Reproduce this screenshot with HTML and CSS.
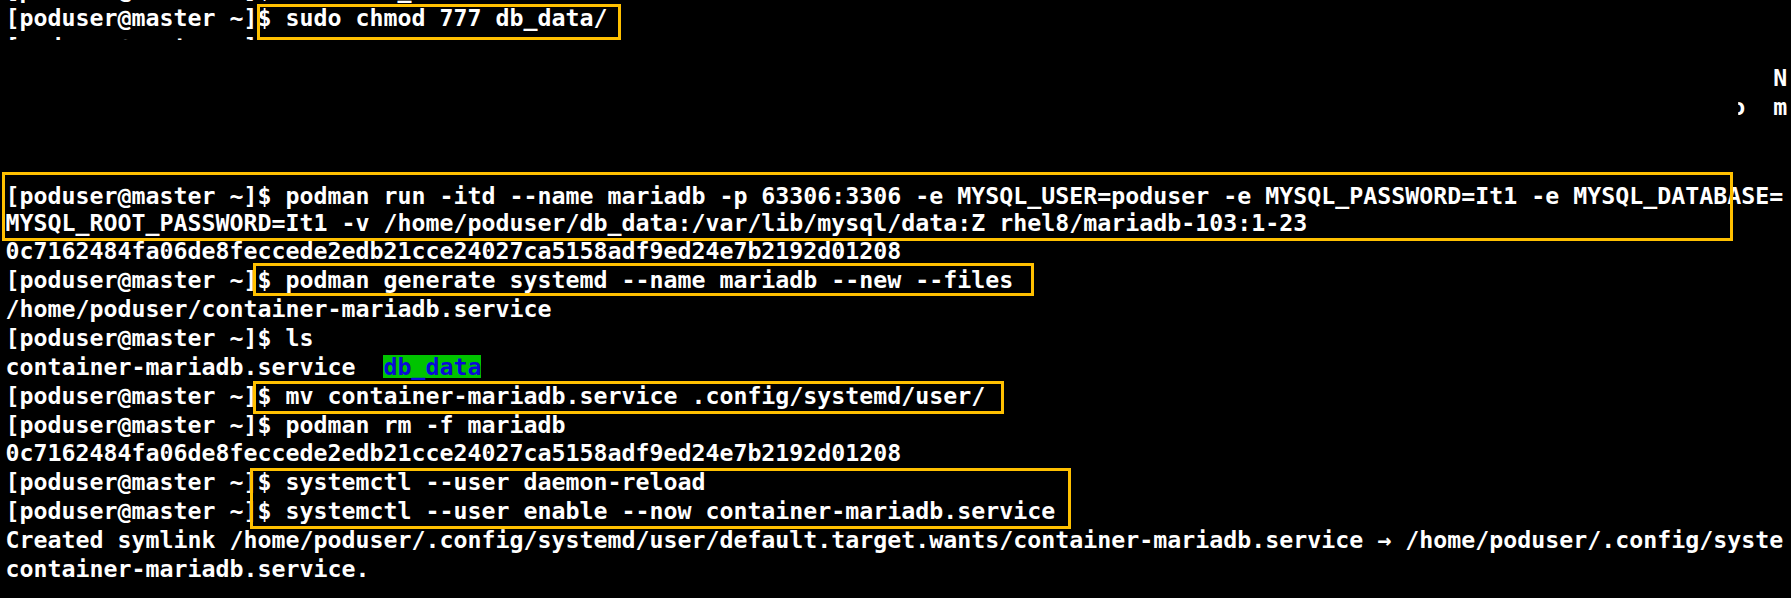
FILE: index.html
```html
<!DOCTYPE html>
<html lang="en">
<head>
<meta charset="utf-8">
<title>Terminal</title>
<link rel="stylesheet" href="styles.css">
</head>
<body>
<div class="term">
  <div class="clip clip-top"><div class="ln">[poduser@master ~]$ mkdir db_data</div></div>
  <div class="ln">[poduser@master ~]$ sudo chmod 777 db_data/</div>
  <div class="clip clip-bottom"><div class="ln">[poduser@master ~]$ ll</div></div>
  <div class="side">
    <div class="ln col-n">N</div>
    <div class="ln col-o"><span class="half">o</span>  m</div>
  </div>
  <div class="main">
    <div class="ln ln-1">[poduser@master ~]$ podman run -itd --name mariadb -p 63306:3306 -e MYSQL_USER=poduser -e MYSQL_PASSWORD=It1 -e MYSQL_DATABASE=</div>
    <div class="ln ln-2">MYSQL_ROOT_PASSWORD=It1 -v /home/poduser/db_data:/var/lib/mysql/data:Z rhel8/mariadb-103:1-23</div>
    <div class="ln">0c7162484fa06de8feccede2edb21cce24027ca5158adf9ed24e7b2192d01208</div>
    <div class="ln">[poduser@master ~]$ podman generate systemd --name mariadb --new --files</div>
    <div class="ln">/home/poduser/container-mariadb.service</div>
    <div class="ln">[poduser@master ~]$ ls</div>
    <div class="ln">container-mariadb.service  <span class="dir">db_data</span></div>
    <div class="ln">[poduser@master ~]$ mv container-mariadb.service .config/systemd/user/</div>
    <div class="ln">[poduser@master ~]$ podman rm -f mariadb</div>
    <div class="ln">0c7162484fa06de8feccede2edb21cce24027ca5158adf9ed24e7b2192d01208</div>
    <div class="ln">[poduser@master ~]$ systemctl --user daemon-reload</div>
    <div class="ln">[poduser@master ~]$ systemctl --user enable --now container-mariadb.service</div>
    <div class="ln">Created symlink /home/poduser/.config/systemd/user/default.target.wants/container-mariadb.service → /home/poduser/.config/syste</div>
    <div class="ln">container-mariadb.service.</div>
  </div>

  <div class="box box-chmod"></div>
  <div class="box box-run"></div>
  <div class="box box-generate"></div>
  <div class="box box-mv"></div>
  <div class="box box-systemctl"></div>
</div>
</body>
</html>
```

FILE: styles.css
```css
html, body {
  margin: 0;
  padding: 0;
  background: #000;
}

.term {
  position: relative;
  width: 1791px;
  height: 598px;
  overflow: hidden;
  box-sizing: border-box;
  padding-left: 5.5px;
  background: #000;
  color: #fff;
  font-family: "DejaVu Sans Mono", "Liberation Mono", monospace;
  font-weight: bold;
  font-size: 23.25px;
  line-height: 28.9px;
}

.ln {
  height: 28.9px;
  white-space: pre;
}

.clip {
  overflow: hidden;
}

.clip-top {
  height: 4.4px;
}

.clip-top .ln {
  margin-top: -24.5px;
}

.clip-bottom {
  height: 6.6px;
}

.side {
  margin-top: 24.5px;
}

.col-n {
  padding-left: calc(127ch - 10px);
}

.col-o {
  padding-left: calc(124ch - 10px);
}

.half {
  display: inline-block;
  clip-path: inset(0 0 0 50%);
}

.main {
  margin-top: 60.3px;
}

.ln-1 {
  height: 26.9px;
}

.ln-2 {
  height: 27.9px;
}

.dir {
  display: inline-block;
  height: 23px;
  line-height: 23px;
  background: #00c400;
  color: #0a0ad8;
}

.box {
  position: absolute;
  box-sizing: border-box;
  border: 3px solid #ffc000;
}

.box-chmod {
  left: 257px;
  top: 4px;
  width: 364px;
  height: 36px;
}

.box-run {
  left: 2px;
  top: 172px;
  width: 1731px;
  height: 69px;
}

.box-generate {
  left: 253px;
  top: 263px;
  width: 781px;
  height: 33px;
}

.box-mv {
  left: 253px;
  top: 381px;
  width: 751px;
  height: 33px;
}

.box-systemctl {
  left: 250px;
  top: 468px;
  width: 821px;
  height: 61px;
}
```
